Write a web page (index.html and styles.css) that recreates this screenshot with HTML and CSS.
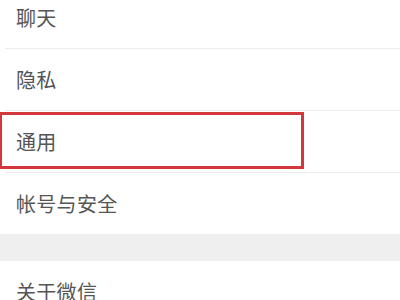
FILE: index.html
```html
<!DOCTYPE html>
<html lang="zh">
<head>
<meta charset="utf-8">
<link rel="stylesheet" href="styles.css">
</head>
<body>
<div class="page">
  <div class="group first">
    <div class="row"><span class="label">聊天</span></div>
    <div class="row"><span class="label">隐私</span></div>
    <div class="row highlighted"><span class="label">通用</span><div class="mark"></div></div>
    <div class="row last"><span class="label">帐号与安全</span></div>
  </div>
  <div class="gap"></div>
  <div class="group">
    <div class="row last"><span class="label">关于微信</span></div>
  </div>
</div>
</body>
</html>
```
FILE: styles.css
```css
html, body {
  margin: 0;
  padding: 0;
  background: #ffffff;
  overflow: hidden;
}
.page {
  width: 400px;
  height: 300px;
  overflow: hidden;
  font-family: "Noto Sans CJK SC", "Noto Sans", sans-serif;
}
.group {
  background: #ffffff;
}
.group.first {
  margin-top: -13px;
}
.row {
  position: relative;
  height: 61px;
  display: flex;
  align-items: center;
  padding-left: 16px;
  border-bottom: 1px solid #ececec;
  margin-left: 5px;
  padding-left: 11px;
}
.row.last {
  border-bottom: none;
}
.label {
  font-size: 20px;
  color: #555555;
  line-height: 1;
  letter-spacing: 0.3px;
}
.gap {
  height: 27px;
  background: #efefef;
}
.mark {
  position: absolute;
  left: -6px;
  top: 1px;
  width: 305px;
  height: 57px;
  border: 3px solid #d2373c;
  box-sizing: border-box;
}
```
